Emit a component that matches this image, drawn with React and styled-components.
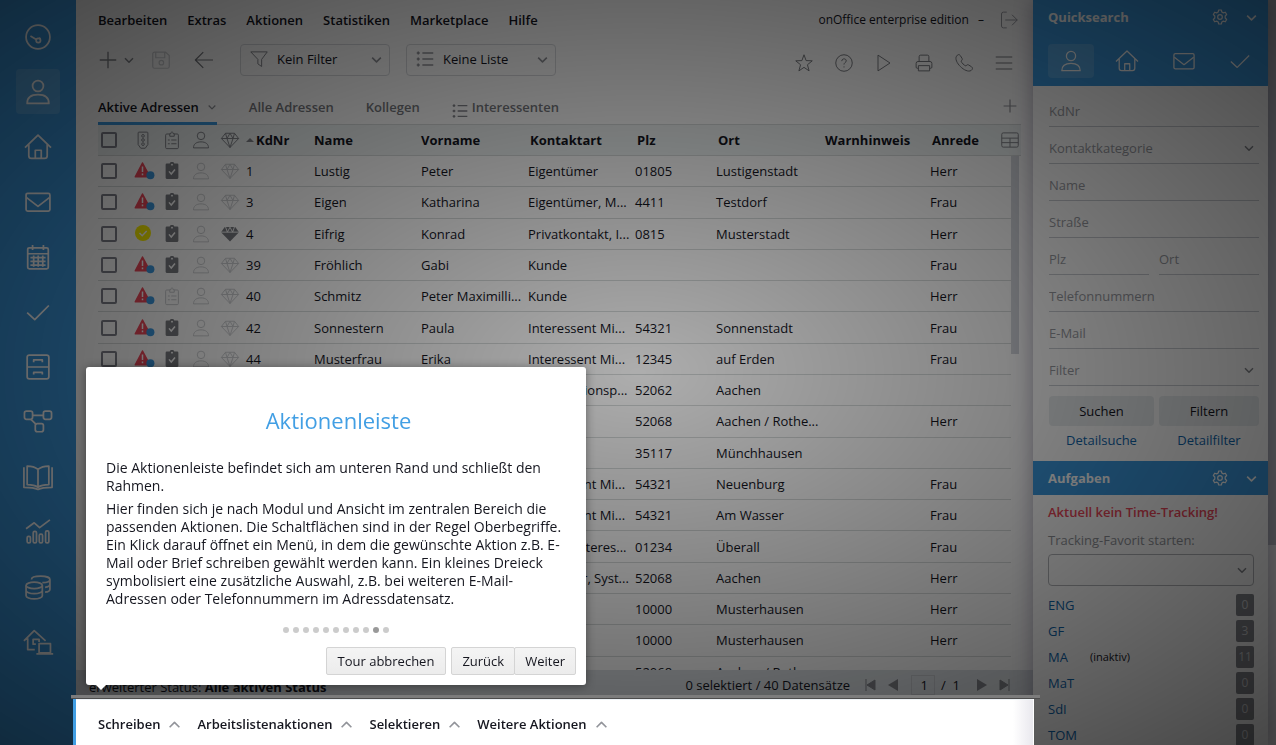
import styled, { createGlobalStyle, css } from "styled-components";

const GlobalStyle = createGlobalStyle`
  * {
    box-sizing: border-box;
  }

  body {
    margin: 0;
    overflow: hidden;
    background: #fff;
    color: #15161f;
    font-family: "Open Sans", "Noto Sans", sans-serif;
    font-size: 13px;
    line-height: 18px;
  }

  button, input, select {
    margin: 0;
    padding: 0;
    border: 0;
    background: none;
    color: inherit;
    font: inherit;
  }

  select, input[type="checkbox"] {
    appearance: none;
  }

  svg {
    display: block;
    flex: none;
  }

  a {
    text-decoration: none;
  }
`;

const icons = {
  gauge: <><circle cx="12" cy="12" r="11" /><circle cx="12.300" cy="15.200" r="2" /><path d="M5 11l5.400 3.300M13.400 13.600l.8-1" /></>,
  person: <><circle cx="12" cy="6.500" r="5" /><path d="M2 22.500c0-5 3.500-8 10-8s10 3 10 8z" /></>,
  house: <path d="M0 12.500L12 1l12 11.500M3.500 9.500V20A2.500 2.500 0 006 22.500h12a2.500 2.500 0 002.500-2.500V9.500M9.500 22.500V15h5.500v7.500" />,
  mail: <><rect x="1" y="4" width="22" height="16.500" rx="1.500" /><path d="M1.500 8l10.500 8 10.500-8" /></>,
  calendar: <><rect x="2.500" y="3.500" width="19" height="19.500" rx="1.500" /><path d="M2.500 9h19M7 1v4.500M17 1v4.500M5 12.500h14M5 16h14M5 19.500h14M8 10.500V21M12.200 10.500V21M16.400 10.500V21" /></>,
  check: <path d="M2 12.500L9 19 22 6" />,
  cabinet: <><rect x="2" y="1" width="20" height="22" rx="2" /><path d="M2 12h20M8 7.500V5.500h8v2M8 19v-2h8v2" /></>,
  nodes: <><rect x="-.5" y="2" width="7.500" height="7.500" rx="1.800" /><rect x="17" y="2" width="7.500" height="7.500" rx="1.800" /><rect x="9.500" y="13.500" width="7.500" height="7.500" rx="1.800" /><path d="M7 5.800h10M5.500 9.500l5 5" /></>,
  book: <path d="M12 5C9.500 3 6 2 2 2v17c4 0 7.500.6 10 2.500 2.500-1.900 6-2.500 10-2.500V2c-4 0-7.500 1-10 3zM12 5v16M-1 3v18.500c5 0 10 .4 13 2 3-1.600 8-2 13-2V3" />,
  chart: <><path d="M1 9l7.500-5.500 5 4.500L23 .800" /><rect x="2" y="16" width="3" height="6" rx="1.300" /><rect x="7.600" y="11.500" width="3" height="10.500" rx="1.300" /><rect x="13.200" y="14" width="3" height="8" rx="1.300" /><rect x="19" y="11" width="3" height="11" rx="1.300" /></>,
  coins: <><ellipse cx="8.500" cy="10.500" rx="7.500" ry="3" /><path d="M1 10.500v9.500c0 1.700 3.400 3 7.500 3s7.500-1.300 7.500-3v-9.500M1 15.200c0 1.700 3.400 3 7.500 3s7.500-1.300 7.500-3M6 5c0-2 3.800-3 8.500-3S23 3.200 23 5s-3 3-7 3M23 5v9c0 1.500-2 2.500-4.500 2.800M23 9.500c0 1.500-2 2.500-4.500 2.800" /></>,
  office: <><path d="M-1 11L8.500 1.500 19 11M2.500 8.500V19H9M13 13.500h10.500v8.500H13zM10.500 23H26" /><path d="M13 12V9.500H7.500V14H10" /></>,
  plus: <path d="M12 1v22M1 12h22" />,
  save: <><path d="M1 4a2.500 2.500 0 012.500-2.500H18l5 4.500v14.500a2.500 2.500 0 01-2.500 2.500h-17A2.500 2.500 0 011 20.500zM5 1.500V9h12V1.500" /><circle cx="12.500" cy="15.500" r="3" /></>,
  back: <path d="M24 12H.5M11 1.500L.5 12 11 22.500" />,
  funnel: <path d="M1 2.500h22L15.500 12.500V22l-5-3.500v-6z" />,
  list: <><path d="M8.500 4H23M8.500 12H23M8.500 20H23" /><path d="M1 4h4M1 12h4M1 20h4M3 2v4M3 10v4M3 18v4" /></>,
  down: <path d="M4 8.500l8 8 8-8" />,
  up: <path d="M3 17l9-9 9 9" />,
  exit: <path d="M9 1.500H4.500A2.500 2.500 0 002 4v16a2.500 2.500 0 002.500 2.500H9M7 12h16M16 5l7 7-7 7" />,
  star: <path d="M12 1l2.800 7.800 8.200.3-6.400 5.200 2.200 8.200L12 17.800l-6.800 4.700 2.200-8.200L1 9.100l8.200-.3z" />,
  help: <><circle cx="12" cy="12" r="11" /><path d="M9 9.500c0-4 6-4 6-.3 0 2-3 2.300-3 4.800M12 16.500v1.500" /></>,
  play: <path d="M4 1.500v21L20 12z" />,
  print: <path d="M5.500 10V3.500a2 2 0 012-2h9a2 2 0 012 2V10M4.500 19H3a1.500 1.500 0 01-1.500-1.500v-5A2.500 2.500 0 014 10h16a2.500 2.500 0 012.500 2.500v5A1.500 1.500 0 0121 19h-1.500M4.500 15.500h15v7h-15z" />,
  phone: <path d="M2 3C3.500.5 5.500 0 7 2l2.500 4c.7 1.200-.2 2.500-1.500 3.500 1 2.500 4 5.500 6.500 6.500 1-1.300 2.300-2.200 3.500-1.500l4 2.500c2 1.500 1.500 3.500-.5 5C14 26.500-2.500 10 2 3z" />,
  menu: <path d="M1 4h22M1 12h22M1 20h22" />,
  grid: <><rect x="1" y="2.500" width="22" height="19" rx="2" /><path d="M1 9.500h22M1 15.500h22M12 9.500v12" /></>,
  light: <><path d="M5.500 2.500a1 1 0 011-1h11a1 1 0 011 1V18l-3.500 5H9l-3.500-5z" /><circle cx="12" cy="6.500" r="1.800" /><circle cx="12" cy="12" r="1.800" /><circle cx="12" cy="17.500" r="1.800" /></>,
  clip: <path d="M9 4H5a1.500 1.500 0 00-1.500 1.500V22a1.500 1.500 0 001.500 1.500h14a1.500 1.500 0 001.500-1.500V5.500A1.500 1.500 0 0019 4h-4M9 3.500h1.500C10.500.5 13.500.5 13.500 3.500H15V7H9zM6.500 12H9M11 12h7M6.500 17H9M11 17h7" />,
  gem: <path d="M6 3h12l5.500 7L12 22 .5 10zM.5 10h23M6 3l2 7 4 12L16 10l2-7M8 10l4-7 4 7" />,
  gear: <><circle cx="12" cy="12" r="3.500" /><path d="M10 1.500h4l.7 3 2.300 1.300 3-1 2 3.500-2.200 2.200v3l2.200 2.200-2 3.500-3-1-2.300 1.300-.7 3h-4l-.7-3L7 18.200l-3 1-2-3.500 2.200-2.200v-3L2 8.300l2-3.500 3 1 2.300-1.300z" /></>,
};

const Icon = ({ name, size = 18, width = 1.3, color = "currentColor" }) => (
  <svg width={size} height={size} viewBox="0 0 24 24" fill="none" stroke={color} strokeWidth={width} strokeLinejoin="round" overflow="visible" aria-hidden="true">
    {icons[name]}
  </svg>
);

const Warning = () => (
  <svg width="22" height="20" viewBox="0 0 22 20" aria-hidden="true">
    <path d="M8.500 2L1.300 15.800h14.600z" fill="#f04a5c" stroke="#f04a5c" strokeWidth="1.500" strokeLinejoin="round" />
    <path d="M8.500 5.500V11M8.500 12.500v1.800" stroke="#fff" strokeWidth="1.500" />
    <circle cx="16.400" cy="14.200" r="4" fill="#3c9ae0" />
  </svg>
);

const Approved = () => (
  <svg width="22" height="20" viewBox="0 0 22 20" aria-hidden="true">
    <circle cx="9" cy="9" r="8" fill="#fdf100" />
    <path d="M5.500 9l2.700 2.700 4.500-4.700" fill="none" stroke="#fff" strokeWidth="1.500" />
  </svg>
);

const ClipDone = () => (
  <svg width="18" height="18" viewBox="0 0 24 24" aria-hidden="true">
    <path d="M9 2c.5-2.500 5.500-2.500 6 0h4A1.500 1.500 0 0120.500 3.500V21a1.500 1.500 0 01-1.500 1.500H5A1.500 1.500 0 013.500 21V3.500A1.500 1.500 0 015 2z" fill="#7c7e84" />
    <path d="M8 12.500l3 3.500 5-6" fill="none" stroke="#fff" strokeWidth="2" />
    <circle cx="12" cy="3.500" r="1.300" fill="#fff" />
  </svg>
);

const GemFull = () => (
  <svg width="18" height="18" viewBox="0 0 24 24" aria-hidden="true">
    <path d="M5 2.500h14l5 7L12 22 0 9.500z" fill="#7c7e84" />
    <path d="M0 9.500h24M6 2.500l2.500 7L12 3l3.500 6.500 2.500-7" fill="none" stroke="#fff" strokeWidth="1.200" />
  </svg>
);

const sideIcons = ["gauge", "person", "house", "mail", "calendar", "check", "cabinet", "nodes", "book", "chart", "coins", "office"];
const menu = ["Bearbeiten", "Extras", "Aktionen", "Statistiken", "Marketplace", "Hilfe"];
const tools = ["star", "help", "play", "print", "phone", "menu"];
const widths = [33, 29, 29, 29, 25, 68, 107, 107, 107, 81, 107, 107, 62];

const rows = [
  ["1", "Lustig", "Peter", "Eigentümer", "01805", "Lustigenstadt", "Herr"],
  ["3", "Eigen", "Katharina", "Eigentümer, M...", "4411", "Testdorf", "Frau"],
  ["4", "Eifrig", "Konrad", "Privatkontakt, I...", "0815", "Musterstadt", "Herr"],
  ["39", "Fröhlich", "Gabi", "Kunde", "", "", "Frau"],
  ["40", "Schmitz", "Peter Maximilli...", "Kunde", "", "", "Herr"],
  ["42", "Sonnestern", "Paula", "Interessent Mi...", "54321", "Sonnenstadt", "Frau"],
  ["44", "Musterfrau", "Erika", "Interessent Mi...", "12345", "auf Erden", "Frau"],
  ["", "", "", "Kooperationsp...", "52062", "Aachen", ""],
  ["", "", "", "", "52068", "Aachen / Rothe...", "Herr"],
  ["", "", "", "", "35117", "Münchhausen", ""],
  ["", "", "", "Interessent Mi...", "54321", "Neuenburg", "Frau"],
  ["", "", "", "Interessent Mi...", "54321", "Am Wasser", "Frau"],
  ["", "", "", "Kunde, Interes...", "01234", "Überall", "Frau"],
  ["", "", "", "Verkäufer, Syst...", "52068", "Aachen", "Herr"],
  ["", "", "", "", "10000", "Musterhausen", "Herr"],
  ["", "", "", "", "10000", "Musterhausen", "Herr"],
  ["", "", "", "", "52068", "Aachen / Rothe...", ""],
];

const tasks = [["ENG", 0], ["GF", 3], ["MA", 11], ["MaT", 0], ["SdI", 0], ["TOM", 0]];

const QuickSearch = () => (
  <>
    <PanelHead>
      <PanelTitle>
        Quicksearch
        <IconButton aria-label="Einstellungen"><Icon name="gear" size={16} width={1.8} /></IconButton>
        <IconButton aria-label="Einklappen"><Icon name="down" size={13} width={3} /></IconButton>
      </PanelTitle>
      <QuickTabs>
        {["person", "house", "mail", "check"].map((name, i) => (
          <QuickTab key={name} $active={i === 0} aria-label={name}><Icon name={name} size={22} width={1.4} /></QuickTab>
        ))}
      </QuickTabs>
    </PanelHead>
    <Fields>
      <Field placeholder="KdNr" aria-label="KdNr" />
      <SelectField>
        <select aria-label="Kontaktkategorie"><option>Kontaktkategorie</option></select>
        <Icon name="down" size={12} width={3} color="#85878d" />
      </SelectField>
      <Field placeholder="Name" aria-label="Name" />
      <Field placeholder="Straße" aria-label="Straße" />
      <FieldPair>
        <Field placeholder="Plz" aria-label="Plz" />
        <Field placeholder="Ort" aria-label="Ort" />
      </FieldPair>
      <Field placeholder="Telefonnummern" aria-label="Telefonnummern" />
      <Field placeholder="E-Mail" aria-label="E-Mail" />
      <SelectField>
        <select aria-label="Filter"><option>Filter</option></select>
        <Icon name="down" size={12} width={3} color="#85878d" />
      </SelectField>
      <SearchActions>
        <GreyButton>Suchen</GreyButton>
        <GreyButton>Filtern</GreyButton>
        <Link href="#">Detailsuche</Link>
        <Link href="#">Detailfilter</Link>
      </SearchActions>
    </Fields>
  </>
);

const Tasks = () => (
  <>
    <PanelHead>
      <PanelTitle>
        Aufgaben
        <IconButton aria-label="Einstellungen"><Icon name="gear" size={16} width={1.8} /></IconButton>
        <IconButton aria-label="Einklappen"><Icon name="down" size={13} width={3} /></IconButton>
      </PanelTitle>
    </PanelHead>
    <TaskBody>
      <Tracking>Aktuell kein Time-Tracking!</Tracking>
      <TrackLabel htmlFor="favorit">Tracking-Favorit starten:</TrackLabel>
      <TrackSelect>
        <select id="favorit" />
        <Icon name="down" size={12} width={3} color="#85878d" />
      </TrackSelect>
      {tasks.map(([name, count]) => (
        <Task key={name}>
          <Link href="#">{name}</Link>
          {name === "MA" && <small>(inaktiv)</small>}
          <Count>{count}</Count>
        </Task>
      ))}
    </TaskBody>
  </>
);

const AddressTable = () => (
  <TableArea>
    <Table>
      <colgroup>
        {widths.map((w, i) => <col key={i} width={w} />)}
        <col />
      </colgroup>
      <thead>
        <tr>
          <Th><Check type="checkbox" aria-label="Alle auswählen" /></Th>
          {["light", "clip", "person", "gem"].map((name) => (
            <Th key={name}><Icon name={name} color="#85878d" /></Th>
          ))}
          <Th><Sorted><SortMark />KdNr</Sorted></Th>
          <Th>Name</Th>
          <Th>Vorname</Th>
          <Th $indent>Kontaktart</Th>
          <Th $indent>Plz</Th>
          <Th $indent>Ort</Th>
          <Th $indent>Warnhinweis</Th>
          <Th $indent>Anrede</Th>
          <Th $end><Icon name="grid" color="#85878d" /></Th>
        </tr>
      </thead>
      <tbody>
        {rows.map(([id, last, first, kind, zip, city, title], i) => (
          <tr key={i}>
            <Td><Check type="checkbox" aria-label={"Auswahl " + last} /></Td>
            <Td>{i === 2 ? <Approved /> : <Warning />}</Td>
            <Td>{i === 4 ? <Icon name="clip" color="#c9cbce" /> : <ClipDone />}</Td>
            <Td><Icon name="person" color="#cdcfd2" /></Td>
            <Td>{i === 2 ? <GemFull /> : <Icon name="gem" color="#cdcfd2" />}</Td>
            <Td>{id}</Td>
            <Td>{last}</Td>
            <Td>{first}</Td>
            <Td>{kind}</Td>
            <Td>{zip}</Td>
            <Td>{city}</Td>
            <Td />
            <Td>{title}</Td>
            <Td />
          </tr>
        ))}
      </tbody>
    </Table>
    <ListScroll><ListThumb /></ListScroll>
  </TableArea>
);

const Tour = () => (
  <TourBox role="dialog" aria-labelledby="tour-title">
    <TourTitle id="tour-title">Aktionenleiste</TourTitle>
    <p>Die Aktionenleiste befindet sich am unteren Rand und schließt den Rahmen.</p>
    <p>
      Hier finden sich je nach Modul und Ansicht im zentralen Bereich die passenden Aktionen. Die Schaltflächen sind in der Regel Oberbegriffe. Ein Klick darauf öffnet ein Menü, in dem die gewünschte Aktion z.B. E-Mail oder Brief schreiben gewählt werden kann. Ein kleines Dreieck symbolisiert eine zusätzliche Auswahl, z.B. bei weiteren E-Mail-Adressen oder Telefonnummern im Adressdatensatz.
    </p>
    <Dots>
      {Array.from({ length: 11 }, (_, i) => <Dot key={i} $active={i === 9} />)}
    </Dots>
    <TourButtons>
      <TourButton>Tour abbrechen</TourButton>
      <ButtonPair>
        <TourButton>Zurück</TourButton>
        <TourButton>Weiter</TourButton>
      </ButtonPair>
    </TourButtons>
  </TourBox>
);

const App = () => {
  return (
    <Page>
      <GlobalStyle />
      <Sidebar>
        {sideIcons.map((name, i) => (
          <SideButton key={name} $active={i === 1} aria-label={name}><Icon name={name} size={26} width={1.6} /></SideButton>
        ))}
      </Sidebar>
      <Main>
        <MenuBar>
          {menu.map((item) => <MenuItem key={item}>{item}</MenuItem>)}
          <Edition>onOffice enterprise edition <span>–</span></Edition>
          <IconButton aria-label="Abmelden"><Icon name="exit" color="#9a9ca3" /></IconButton>
        </MenuBar>
        <ToolBar>
          <NewButton aria-label="Neu">
            <Icon name="plus" color="#85878d" width={1.8} />
            <Icon name="down" size={12} width={3} color="#85878d" />
          </NewButton>
          <IconButton aria-label="Speichern"><Icon name="save" size={18} width={1.6} color="#d0d2d5" /></IconButton>
          <IconButton aria-label="Zurück"><Icon name="back" size={18} width={1.6} color="#77797e" /></IconButton>
          <Selects>
            <ToolSelect>
              <Icon name="funnel" color="#85878d" />
              <select aria-label="Filter"><option>Kein Filter</option></select>
              <Icon name="down" size={13} width={3} color="#92949a" />
            </ToolSelect>
            <ToolSelect>
              <Icon name="list" width={2} color="#92949a" />
              <select aria-label="Liste"><option>Keine Liste</option></select>
              <Icon name="down" size={13} width={3} color="#92949a" />
            </ToolSelect>
          </Selects>
          <Tools>
            {tools.map((name) => <IconButton key={name} aria-label={name}><Icon name={name} color="#77797e" /></IconButton>)}
          </Tools>
        </ToolBar>
        <Tabs>
          <Tab $active>Aktive Adressen <Icon name="down" size={10} width={3} color="#92949a" /></Tab>
          <Tab>Alle Adressen</Tab>
          <Tab>Kollegen</Tab>
          <Tab><ListMark><Icon name="list" width={2} size={16} color="#85878d" /></ListMark>Interessenten</Tab>
          <IconButton aria-label="Tab hinzufügen"><Icon name="plus" size={14} width={2} color="#92949a" /></IconButton>
        </Tabs>
        <AddressTable />
        <StatusBar>
          <Status>erweiterter Status: <b>Alle aktiven Status</b></Status>
          <span>0 selektiert / 40 Datensätze</span>
          <Pager>
            <PageButton aria-label="Erste Seite"><svg width="11" height="12" viewBox="0 0 11 12"><path d="M1 0v12M10 1v10L2 6z" fill="#85878d" stroke="#85878d" /></svg></PageButton>
            <PageButton aria-label="Vorige Seite"><svg width="11" height="12" viewBox="0 0 11 12"><path d="M10 0v12L0 6z" fill="#85878d" /></svg></PageButton>
            <PageInput defaultValue="1" aria-label="Seite" />
            <PageTotal>/&nbsp; 1</PageTotal>
            <PageButton aria-label="Nächste Seite"><svg width="11" height="12" viewBox="0 0 11 12"><path d="M1 0v12l10-6z" fill="#85878d" /></svg></PageButton>
            <PageButton aria-label="Letzte Seite"><svg width="11" height="12" viewBox="0 0 11 12"><path d="M10 0v12M1 1v10l8-5z" fill="#85878d" stroke="#85878d" /></svg></PageButton>
          </Pager>
        </StatusBar>
        <ActionBar>
          {["Schreiben", "Arbeitslistenaktionen", "Selektieren", "Weitere Aktionen"].map((item) => (
            <Action key={item}>{item} <Icon name="up" size={13} width={3} color="#92949a" /></Action>
          ))}
          <Tour />
        </ActionBar>
      </Main>
      <Panel>
        <QuickSearch />
        <Tasks />
      </Panel>
      <PageScroll />
      <Overlay />
    </Page>
  );
};

export default App;

const Page = styled.div`
  display: grid;
  grid-template-columns: 76px minmax(0, 1fr) 235px 8px;
  height: 100vh;
  overflow: hidden;
`;

const Overlay = styled.div`
  position: fixed;
  inset: 0;
  z-index: 10;
  opacity: 0.8;
  background: radial-gradient(ellipse farthest-corner at center, rgba(0, 0, 0, 0.4) 0%, rgba(0, 0, 0, 0.9) 100%);
`;

const Sidebar = styled.nav`
  display: flex;
  flex-direction: column;
  align-items: center;
  gap: 10px;
  padding-top: 14px;
  background: #3c9ae0;
  color: #fff;
`;

const IconButton = styled.button`
  display: flex;
  align-items: center;
  justify-content: center;
`;

const SideButton = styled(IconButton)`
  flex: none;
  width: 44px;
  height: 45px;
  border-radius: 4px;
  background: ${({ $active }) => ($active ? "rgba(255, 255, 255, 0.15)" : "none")};
`;

const Main = styled.main`
  display: flex;
  flex-direction: column;
  min-height: 0;
  background: #fff;
`;

const MenuBar = styled.div`
  display: flex;
  align-items: center;
  gap: 20px;
  height: 40px;
  padding: 0 15px 0 22px;
`;

const MenuItem = styled.button`
  font-weight: 600;
`;

const Edition = styled.div`
  margin: 0 -5px 0 auto;
  font-size: 12px;
  white-space: nowrap;

  span {
    padding: 0 1px 0 6px;
  }
`;

const ToolBar = styled.div`
  display: flex;
  align-items: center;
  height: 40px;
  padding: 0 20px 0 23px;
  gap: 25px;
`;

const NewButton = styled(IconButton)`
  gap: 6px;
  margin-right: -8px;
`;

const Selects = styled.div`
  display: flex;
  gap: 16px;
  margin-left: 2px;
`;

const ToolSelect = styled.div`
  display: flex;
  align-items: center;
  width: 150px;
  height: 32px;
  padding: 0 6px 2px 9px;
  border: 1px solid #d8dade;
  border-radius: 4px;

  select {
    flex: 1;
    min-width: 0;
    padding-left: 9px;
  }
`;

const Tools = styled.div`
  display: flex;
  gap: 22px;
  margin-left: auto;
  padding-top: 6px;
`;

const Tabs = styled.div`
  display: flex;
  gap: 32px;
  height: 45px;
  margin: 0 12px 0 22px;
  padding: 8px 4px 0 0;
  border-bottom: 1px solid #d8dcdc;

  & > ${IconButton} {
    margin-left: auto;
  }
`;

const Tab = styled.button`
  display: flex;
  align-items: center;
  gap: 8px;
  margin-bottom: -1px;
  font-weight: 600;
  color: #77797e;

  ${({ $active }) => $active && css`
    color: inherit;
    box-shadow: inset 0 -3px #3c9ae0;
  `}
`;

const ListMark = styled.span`
  padding-top: 8px;
  margin-right: -4px;
`;

const TableArea = styled.div`
  position: relative;
  flex: 1;
  min-height: 0;
  margin: 0 12px 0 22px;
  overflow: hidden;
`;

const Table = styled.table`
  width: 100%;
  height: 563px;
  border-collapse: separate;
  border-spacing: 0;
  table-layout: fixed;
`;

const cell = css`
  padding: 0 0 0 3px;
  border-bottom: 1px solid #d8dcdc;
  text-align: left;
  white-space: nowrap;
`;

const Th = styled.th`
  ${cell}
  height: 31px;
  padding-left: ${({ $indent }) => ($indent ? "5px" : "3px")};
  background: #f0f5f5;

  & > svg {
    margin-left: ${({ $end }) => ($end ? "9px" : "0")};
  }
`;

const Td = styled.td`
  ${cell}
`;

const Check = styled.input`
  display: block;
  width: 16px;
  height: 16px;
  border: 2px solid #80828c;
  border-radius: 2px;
`;

const Sorted = styled.span`
  display: flex;
  align-items: center;
  gap: 2px;
`;

const SortMark = styled.span`
  border: 4px solid transparent;
  border-top: 0;
  border-bottom-color: #85878d;
`;

const ListScroll = styled.div`
  position: absolute;
  top: 31px;
  right: 0;
  bottom: 0;
  width: 10px;
  background: #fff;
`;

const ListThumb = styled.div`
  width: 8px;
  height: 198px;
  background: #d5d8de;
`;

const StatusBar = styled.div`
  display: flex;
  align-items: center;
  height: 28px;
  padding: 2px 23px 0 13px;
  background: #dde2e6;
`;

const Status = styled.div`
  margin-right: auto;
  padding-top: 4px;
`;

const Pager = styled.div`
  display: flex;
  align-items: center;
  gap: 12px;
  margin-left: 15px;
`;

const PageButton = styled(IconButton)`
  width: 11px;
`;

const PageInput = styled.input`
  width: 24px;
  height: 20px;
  padding-right: 6px;
  border: 1px solid #c9ccd2;
  text-align: right;
`;

const PageTotal = styled.span`
  margin: 0 4px 0 -6px;
`;

const ActionBar = styled.div`
  position: relative;
  z-index: 20;
  display: flex;
  align-items: center;
  gap: 16px;
  height: 47px;
  padding: 3px 22px 0;
  border-top: 2px solid #edf2f6;
  background: linear-gradient(to left, #e9e8ee, #fff 20px);
  box-shadow: -3px 0 #429fe4, 1px 0 #fff;

  &::before {
    content: "";
    position: absolute;
    top: -5px;
    left: -5px;
    right: -7px;
    height: 3px;
    border-bottom: 1px solid #4c4c4c;
    background: #7c7c7c;
  }
`;

const Action = styled.button`
  display: flex;
  align-items: center;
  gap: 8px;
  font-weight: 600;
`;

const TourBox = styled.div`
  position: absolute;
  bottom: 60px;
  left: 10px;
  width: 500px;
  padding: 38px 10px 10px 20px;
  border-radius: 3px;
  background: #fff;
  font-size: 14px;
  box-shadow: 0 1px 10px rgba(0, 0, 0, 0.4);

  p {
    margin: 0 10px 5px 0;
  }

  &::after {
    content: "";
    position: absolute;
    top: 100%;
    left: 10px;
    border: 5px solid transparent;
    border-top-color: #fff;
  }
`;

const TourTitle = styled.h1`
  margin: 0 5px 23px 0;
  color: #429fe4;
  font-size: 22px;
  font-weight: 400;
  line-height: 31px;
  text-align: center;
`;

const Dots = styled.div`
  display: flex;
  justify-content: center;
  gap: 4px;
  margin: 19px 10px 14px 0;
`;

const Dot = styled.span`
  width: 6px;
  height: 6px;
  border-radius: 50%;
  background: ${({ $active }) => ($active ? "#999" : "#ccc")};
`;

const TourButton = styled.button`
  height: 28px;
  padding: 0 10px;
  border: 1px solid #d4d4d4;
  border-radius: 2px;
  background: linear-gradient(#f4f4f4, #ececec);
  font-size: 13px;
`;

const TourButtons = styled.div`
  display: flex;
  justify-content: flex-end;
  gap: 5px;

  & > ${TourButton} {
    padding: 0 11px;
  }
`;

const ButtonPair = styled.div`
  display: flex;

  ${TourButton} + ${TourButton} {
    margin-left: -1px;
  }
`;

const Panel = styled.aside`
  position: relative;
  min-height: 0;
  background: #fff;
  box-shadow: 0 0 20px rgba(50, 40, 80, 0.4);
`;

const PanelHead = styled.div`
  padding: 0 10px 0 15px;
  background: #3c9ae0;
  color: #fff;
`;

const PanelTitle = styled.h2`
  display: flex;
  align-items: center;
  gap: 17px;
  height: 34px;
  margin: 0;
  font-size: 13px;

  ${IconButton}:nth-of-type(1) {
    margin-left: auto;
  }
`;

const QuickTabs = styled.div`
  display: flex;
  justify-content: space-between;
  padding: 10px 0 8px;
  margin-right: -5px;
`;

const QuickTab = styled(IconButton)`
  width: 46px;
  height: 34px;
  border-radius: 4px;
  background: ${({ $active }) => ($active ? "rgba(255, 255, 255, 0.15)" : "none")};
`;

const Fields = styled.div`
  padding: 4px 9px 12px 16px;
  color: #9a9ca3;
`;

const line = css`
  width: 100%;
  height: 37px;
  padding-top: 6px;
  border-bottom: 1px solid #c9ccd2;
`;

const Field = styled.input`
  ${line}
  display: block;

  &::placeholder {
    color: #9a9ca3;
    opacity: 1;
  }
`;

const SelectField = styled.div`
  ${line}
  display: flex;
  align-items: center;
  padding-right: 4px;

  select {
    flex: 1;
  }
`;

const FieldPair = styled.div`
  display: grid;
  grid-template-columns: 100px 1fr;
  gap: 10px;
`;

const SearchActions = styled.div`
  display: grid;
  grid-template-columns: 105px 1fr;
  gap: 5px;
  padding-top: 10px;
  text-align: center;
`;

const GreyButton = styled.button`
  height: 30px;
  border-radius: 4px;
  background: #e9edef;
  color: #15161f;
`;

const Link = styled.a`
  color: #0f67ae;
`;

const TaskBody = styled.div`
  padding: 8px 14px 0 15px;
`;

const Tracking = styled.div`
  margin-bottom: 10px;
  color: #f04a5c;
  font-weight: 600;
`;

const TrackLabel = styled.label`
  color: #92949a;
`;

const TrackSelect = styled.div`
  display: flex;
  align-items: center;
  height: 32px;
  margin: 5px 0 6px;
  padding-right: 5px;
  border: 1px solid #b4b6ba;
  border-radius: 4px;

  select {
    flex: 1;
  }
`;

const Task = styled.div`
  display: flex;
  align-items: center;
  height: 26px;

  small {
    margin-left: 22px;
    font-size: 11px;
  }
`;

const Count = styled.span`
  width: 18px;
  margin-left: auto;
  border-radius: 2px;
  background: #85878d;
  color: #d0d2d5;
  font-size: 12px;
  line-height: 22px;
  text-align: center;
`;

const PageScroll = styled.div`
  height: 545px;
  background: #c9ccd2;
`;
